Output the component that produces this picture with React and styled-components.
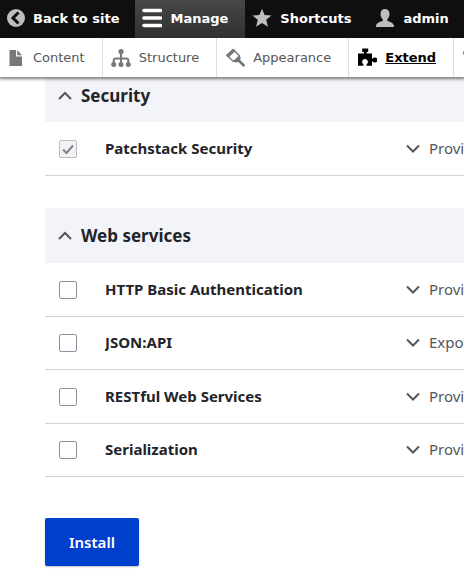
import React from "react";
import styled, { createGlobalStyle, css } from "styled-components";

const GlobalStyle = createGlobalStyle`
  *, *::before, *::after { box-sizing: border-box; }
  body {
    margin: 0;
    background: #fff;
    color: #232429;
    font-family: "Noto Sans", "Open Sans", sans-serif;
    font-size: 15px;
    overflow-x: hidden;
  }
`;

const Page = styled.div`
  overflow: hidden;
`;

const Toolbar = styled.header`
  position: relative;
  font-family: "DejaVu Sans", sans-serif;
  font-size: 13px;
  box-shadow: 0 1px 3px 1px rgba(0, 0, 0, 0.5);
`;

const Bar = styled.nav`
  display: flex;
  height: 38px;
  background: #0f0f0f;
`;

const BarLink = styled.a`
  display: flex;
  align-items: center;
  flex: none;
  gap: 8px;
  padding: 0 17px 2px 7px;
  color: #fff;
  font-weight: 700;
  text-decoration: none;
  white-space: nowrap;
  &:first-child {
    padding-left: 5px;
    padding-right: 16px;
  }
  ${(p) =>
    p.$active &&
    css`
      background: linear-gradient(#474747, #303030);
    `}
`;

const Tray = styled.nav`
  display: flex;
  height: 39px;
  background: #fff;
`;

const TrayLink = styled.a`
  display: flex;
  align-items: center;
  flex: none;
  gap: 8px;
  padding: 0 17px 0 8px;
  border-right: 1px solid #ddd;
  color: ${(p) => (p.$active ? "#000" : "#565656")};
  font-weight: ${(p) => (p.$active ? 700 : 400)};
  text-decoration: ${(p) => (p.$active ? "underline" : "none")};
  white-space: nowrap;
  &:first-child {
    padding-left: 5px;
  }
`;

const Icon = styled.svg`
  flex: none;
  display: block;
  width: 20px;
  height: 20px;
`;

const Main = styled.main`
  padding-left: 45px;
`;

const Group = styled.section`
  margin-bottom: 32px;
`;

const GroupTitle = styled.button`
  display: flex;
  align-items: center;
  gap: 8px;
  width: 100%;
  height: ${(p) => (p.$tucked ? "45px" : "55px")};
  padding: ${(p) => (p.$tucked ? "0 12px 8px" : "0 12px")};
  border: 0;
  background: #f3f4f9;
  color: #232429;
  font: 700 17px "Noto Sans", "Open Sans", sans-serif;
  text-align: left;
`;

const Chevron = styled.svg`
  flex: none;
  width: 16px;
  height: 16px;
  fill: none;
  stroke: #55565b;
  stroke-width: 2;
`;

const Modules = styled.table`
  width: 100%;
  border-spacing: 0;
  table-layout: fixed;
`;

const ModuleRow = styled.tr`
  height: 54px;
  &:nth-child(even) {
    height: 53px;
  }
`;

const Cell = styled.td`
  width: ${(p) => p.$width || "auto"};
  padding: 0 0 2px ${(p) => p.$inset || "0"};
  border-bottom: 1px solid #d3d4d9;
  overflow: hidden;
  white-space: nowrap;
`;

const Check = styled.input`
  appearance: none;
  display: block;
  width: 18px;
  height: 18px;
  margin: 2px 0 0;
  border: 1px solid #8e929c;
  border-radius: 2px;
  background: #fff;
  &:disabled {
    border-color: #bababf;
    background: #f2f2f3
      url("data:image/svg+xml,%3Csvg xmlns='http://www.w3.org/2000/svg' viewBox='0 0 16 16'%3E%3Cpath d='M3 8.5 6.5 12 13 4.5' fill='none' stroke='%2382828c' stroke-width='2'/%3E%3C/svg%3E")
      center / 16px no-repeat;
  }
`;

const Name = styled.label`
  font-weight: 700;
`;

const Details = styled.button`
  display: flex;
  align-items: center;
  gap: 8px;
  padding: 0;
  border: 0;
  background: none;
  color: #55565b;
  font: 400 15px "Noto Sans", "Open Sans", sans-serif;
`;

const Install = styled.button`
  display: block;
  height: 48px;
  margin: 41px 0 10px;
  padding: 0 24px 1px;
  border: 0;
  border-radius: 2px;
  background: #003ecc;
  box-shadow: 0 1px 2px rgba(0, 0, 0, 0.25);
  color: #fff;
  font: 600 15px "Noto Sans", "Open Sans", sans-serif;
`;

const icons = {
  back: (
    <>
      <circle cx="11" cy="10" r="9" fill="#bebebe" />
      <path d="M13.500 4.500 8 10l5.500 5.500" fill="none" stroke="#0f0f0f" strokeWidth="3" />
    </>
  ),
  menu: <path d="M2 2.500h16.500M2 10h16.500M2 17.500h16.500" stroke="#fff" strokeWidth="3.600" strokeLinecap="round" />,
  star: <path d="m10 .8 2.600 6.200 6.900.5-5.300 4.300 1.800 7-6-3.800-6 3.800 1.800-7L.5 7.500l6.900-.5z" fill="#bebebe" />,
  person: (
    <path d="M10 1c3 0 4.500 2 4.500 5 0 2.400-1 4.200-2.200 5.200v1.600c2 1.200 6.700 1.700 6.700 5.700v.5H1v-.5c0-4 4.700-4.500 6.700-5.700v-1.600C6.500 10.200 5.500 8.400 5.500 6c0-3 1.500-5 4.500-5z" fill="#bebebe" />
  ),
  file: <path d="M4.500 2H11v6.500h6V18H4.500zM12.200 2l4.800 5.200h-4.800z" fill="#787878" />,
  structure: (
    <>
      <path d="M10 4v12M2.700 16v-3.500q0-2 2-2h10.600q2 0 2 2V16" fill="none" stroke="#787878" strokeWidth="2" />
      <g fill="#787878">
        <circle cx="10" cy="3.500" r="2.600" />
        <circle cx="2.700" cy="16.500" r="2.500" />
        <circle cx="10" cy="16.500" r="2.500" />
        <circle cx="17.300" cy="16.500" r="2.500" />
      </g>
    </>
  ),
  brush: (
    <>
      <path d="M2 7.500 8.500 1.500 14.500 8 8.500 13.500z" fill="#fff" stroke="#787878" strokeWidth="1.400" strokeLinejoin="round" />
      <path d="M1 7 8 .8 10.200 3.200 3.600 9.600z" fill="#787878" />
      <path d="m8 13.800 6.800-6 1 2.200-.8 1.800 4.800 4.700q.5 1.500-1.300 2.500l-5.300-5-2.200.6z" fill="#787878" />
    </>
  ),
  puzzle: (
    <g fill="#000">
      <path d="M1 5.500h6V4H5.200V.6h6V4H9.600v1.500H15v5.200h1.200v2.600H15v4.500H9.600v-1.500a2.900 2.900 0 1 0-3.200 0v1.500H1z" />
      <circle cx="17.800" cy="12" r="2.500" />
    </g>
  ),
  wrench: (
    <path d="M1.500 2.500 1 6l3 4 4 1 7 7 2-2-7-7-.5-4L6 2l1 4-2.500 1z" fill="#787878" />
  ),
};

function Glyph({ name }) {
  return (
    <Icon viewBox="0 0 20 20" aria-hidden="true">
      {icons[name]}
    </Icon>
  );
}

const barItems = [
  { icon: "back", label: "Back to site" },
  { icon: "menu", label: "Manage", active: true },
  { icon: "star", label: "Shortcuts" },
  { icon: "person", label: "admin" },
];

const trayItems = [
  { icon: "file", label: "Content" },
  { icon: "structure", label: "Structure" },
  { icon: "brush", label: "Appearance" },
  { icon: "puzzle", label: "Extend", active: true },
];

const groups = [
  {
    title: "Security",
    tucked: true,
    modules: [{ name: "Patchstack Security", about: "Provides", locked: true }],
  },
  {
    title: "Web services",
    modules: [
      { name: "HTTP Basic Authentication", about: "Provides" },
      { name: "JSON:API", about: "Exposes" },
      { name: "RESTful Web Services", about: "Provides" },
      { name: "Serialization", about: "Provides" },
    ],
  },
];

function Module({ name, about, locked }) {
  const id = name.toLowerCase().replace(/[^a-z]+/g, "-");
  return (
    <ModuleRow>
      <Cell $width="60px" $inset="14px">
        <Check type="checkbox" id={id} defaultChecked={locked} disabled={locked} />
      </Cell>
      <Cell $width="300px">
        <Name htmlFor={id}>{name}</Name>
      </Cell>
      <Cell>
        <Details type="button">
          <Chevron viewBox="0 0 16 16" aria-hidden="true">
            <path d="m2 5.500 6 6 6-6" />
          </Chevron>
          {about}
        </Details>
      </Cell>
    </ModuleRow>
  );
}

export default function App() {
  return (
    <Page>
      <GlobalStyle />
      <Toolbar>
        <Bar>
          {barItems.map((item) => (
            <BarLink key={item.label} href="#" $active={item.active}>
              <Glyph name={item.icon} />
              {item.label}
            </BarLink>
          ))}
        </Bar>
        <Tray>
          {trayItems.map((item) => (
            <TrayLink key={item.label} href="#" $active={item.active}>
              <Glyph name={item.icon} />
              {item.label}
            </TrayLink>
          ))}
          <TrayLink href="#" aria-label="Configuration">
            <Glyph name="wrench" />
          </TrayLink>
        </Tray>
      </Toolbar>
      <Main>
        {groups.map((group) => (
          <Group key={group.title}>
            <GroupTitle type="button" $tucked={group.tucked}>
              <Chevron viewBox="0 0 16 16" aria-hidden="true">
                <path d="m2 11 6-6 6 6" />
              </Chevron>
              {group.title}
            </GroupTitle>
            <Modules>
              <tbody>
                {group.modules.map((module) => (
                  <Module key={module.name} {...module} />
                ))}
              </tbody>
            </Modules>
          </Group>
        ))}
        <Install type="button">Install</Install>
      </Main>
    </Page>
  );
}
